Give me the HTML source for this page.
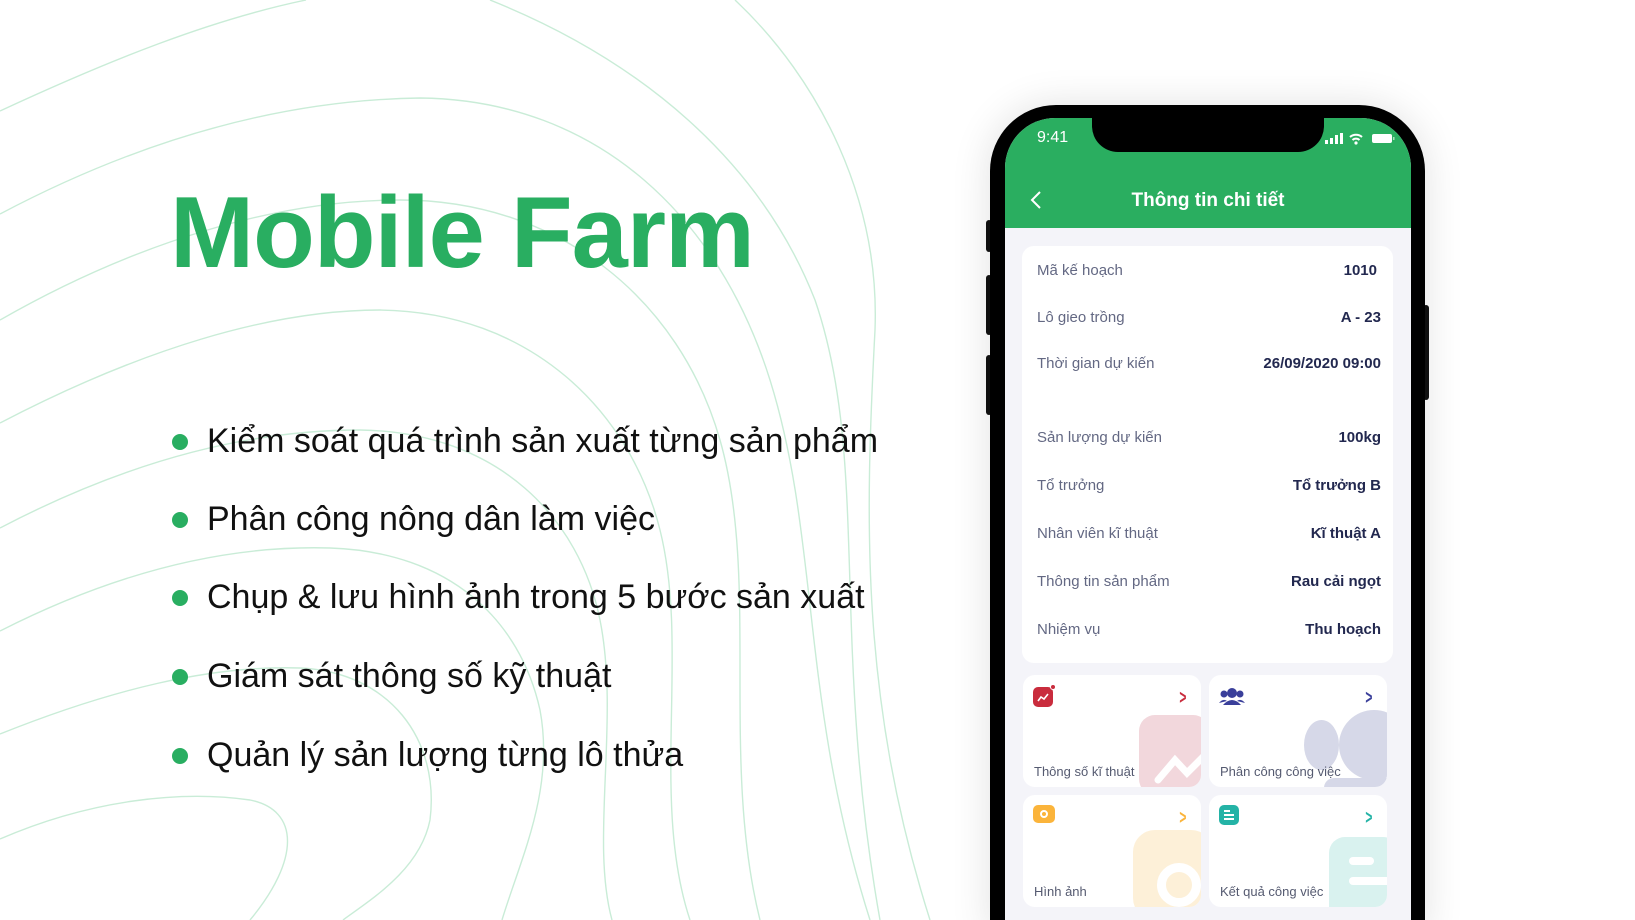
<!DOCTYPE html>
<html><head><meta charset="utf-8"><style>
*{margin:0;padding:0;box-sizing:border-box}
html{width:1635px;height:920px;overflow:hidden}
body{width:1635px;height:920px;overflow:hidden;background:#fff;position:relative;font-family:"Liberation Sans",sans-serif}
.abs{position:absolute}
h1{position:absolute;left:170px;top:176px;font-size:101px;font-weight:bold;color:#29ae61;letter-spacing:-1px;white-space:nowrap}
.b{position:absolute;left:172px;font-size:34px;color:#111;white-space:nowrap;line-height:40px}
.b:before{content:"";position:absolute;left:0;top:13px;width:16px;height:16px;border-radius:50%;background:#29ae61}
.b span{margin-left:35px}
.phone{position:absolute;left:990px;top:105px;width:435px;height:830px;background:#000;border-radius:66px 66px 0 0;box-shadow:0 0 40px rgba(0,0,0,.12)}
.screen{position:absolute;left:1005px;top:118px;width:406px;height:802px;background:#f4f4f9;border-radius:50px 50px 0 0;overflow:hidden}
.hdr{position:absolute;left:0;top:0;width:406px;height:110px;background:#2aae60}
.notch{position:absolute;left:87px;top:-2px;width:232px;height:36px;background:#000;border-radius:0 0 26px 26px}
.card{position:absolute;left:17px;top:128px;width:371px;height:417px;background:#fff;border-radius:12px}
.row{position:absolute;left:15px;right:12px;font-size:15px;line-height:20px}
.row .l{color:#636883}
.row .v{position:absolute;right:0;top:0;color:#22284f;font-weight:bold}
.tile{position:absolute;width:178px;height:112px;background:#fff;border-radius:12px;overflow:hidden}
.tile .t{position:absolute;left:11px;bottom:8px;font-size:13px;color:#555a70;white-space:nowrap}
.tile .ch{position:absolute;right:12px;top:12px;font-size:20px;font-weight:bold;transform:scaleX(.6)}
.btn{position:absolute;background:#111;width:6px}
</style></head><body>
<svg class="abs" style="left:0;top:0" width="960" height="920" fill="none" stroke="#c9ecd7" stroke-width="1.4">
<path d="M0,111 C110,60 210,20 306,0"/>
<path d="M0,214 C140,140 280,100 420,98 C600,100 720,220 770,380 C820,540 800,700 870,920"/>
<path d="M490,0 C640,60 760,160 815,300 C870,460 830,640 880,920"/>
<path d="M735,0 C820,80 880,200 875,330 C865,520 860,700 930,920"/>
<path d="M0,320 C140,240 280,200 400,200 C560,200 680,300 720,440 C760,580 720,760 760,920"/>
<path d="M0,423 C140,350 270,310 380,310 C530,312 630,410 660,530 C690,650 650,800 690,920"/>
<path d="M0,528 C130,460 250,430 360,430 C500,432 580,520 600,620 C620,720 590,840 612,920"/>
<path d="M0,631 C120,570 230,545 330,548 C450,552 520,620 540,710 C555,790 520,860 502,920"/>
<path d="M0,734 C110,690 210,665 300,668 C390,672 440,740 430,820 C420,870 370,900 343,920"/>
<path d="M0,839 C90,800 180,790 250,800 C300,810 300,860 250,920"/>
</svg>
<h1>Mobile Farm</h1>
<div class="b" style="top:421px"><span>Kiểm soát quá trình sản xuất từng sản phẩm</span></div>
<div class="b" style="top:499px"><span>Phân công nông dân làm việc</span></div>
<div class="b" style="top:577px"><span>Chụp &amp; lưu hình ảnh trong 5 bước sản xuất</span></div>
<div class="b" style="top:656px"><span>Giám sát thông số kỹ thuật</span></div>
<div class="b" style="top:735px"><span>Quản lý sản lượng từng lô thửa</span></div>

<div class="btn" style="left:986px;top:220px;height:32px;border-radius:3px"></div>
<div class="btn" style="left:986px;top:275px;height:60px;border-radius:3px"></div>
<div class="btn" style="left:986px;top:355px;height:60px;border-radius:3px"></div>
<div class="btn" style="left:1423px;top:305px;height:95px;border-radius:3px"></div>
<div class="phone"></div>
<div class="screen">
 <div class="hdr">
  <div class="notch"></div>
  <div class="abs" style="left:32px;top:11px;color:#fff;font-size:16px">9:41</div>
  <svg class="abs" style="left:320px;top:14px" width="72" height="14">
   <rect x="0" y="8" width="3" height="4" fill="#fff"/><rect x="5" y="6" width="3" height="6" fill="#fff"/><rect x="10" y="3" width="3" height="9" fill="#fff"/><rect x="15" y="1" width="3" height="11" fill="#fff"/>
   <path d="M25,5 A9,9 0 0 1 37,5 M27.5,8 A5,5 0 0 1 34.5,8" stroke="#fff" stroke-width="2" fill="none"/><circle cx="31" cy="11" r="1.6" fill="#fff"/>
   <rect x="47" y="2" width="20" height="9" rx="2" fill="#fff"/><rect x="68" y="5" width="1.5" height="3" fill="#fff" opacity=".6"/>
  </svg>
  <svg class="abs" style="left:24px;top:72px" width="14" height="20"><path d="M11,2 L3,10 L11,18" stroke="#fff" stroke-width="2" fill="none"/></svg>
  <div class="abs" style="left:0;width:406px;top:72px;text-align:center;color:#fff;font-size:19px;font-weight:bold">Thông tin chi tiết</div>
 </div>
 <div class="card">
  <div class="row" style="top:15px"><span class="l">Mã kế hoạch</span><span class="v" style="right:4px">1010</span></div>
  <div class="row" style="top:62px"><span class="l">Lô gieo trồng</span><span class="v">A - 23</span></div>
  <div class="row" style="top:108px"><span class="l">Thời gian dự kiến</span><span class="v">26/09/2020 09:00</span></div>
  <div class="row" style="top:182px"><span class="l">Sản lượng dự kiến</span><span class="v">100kg</span></div>
  <div class="row" style="top:230px"><span class="l">Tổ trưởng</span><span class="v">Tổ trưởng B</span></div>
  <div class="row" style="top:278px"><span class="l">Nhân viên kĩ thuật</span><span class="v">Kĩ thuật A</span></div>
  <div class="row" style="top:326px"><span class="l">Thông tin sản phẩm</span><span class="v">Rau cải ngọt</span></div>
  <div class="row" style="top:374px"><span class="l">Nhiệm vụ</span><span class="v">Thu hoạch</span></div>
 </div>
 <div class="tile" style="left:18px;top:557px">
  <div class="abs" style="left:116px;top:40px;width:70px;height:80px;background:#f2d7dc;border-radius:16px"></div>
  <svg class="abs" style="left:130px;top:70px" width="60" height="40"><path d="M5,35 L22,15 L34,28 L58,4" stroke="#fff" stroke-width="7" fill="none" stroke-linecap="round"/></svg>
  <div class="abs" style="left:10px;top:12px;width:20px;height:20px;background:#c92c3d;border-radius:5px"></div>
  <svg class="abs" style="left:13px;top:16px" width="14" height="12"><path d="M2,10 L5,6 L8,8 L12,3" stroke="#fff" stroke-width="1.6" fill="none"/></svg>
  <div class="abs" style="left:27px;top:9px;width:6px;height:6px;background:#c92c3d;border-radius:50%;border:1px solid #fff"></div>
  <div class="ch" style="color:#c92c3d">&gt;</div>
  <div class="t">Thông số kĩ thuật</div>
 </div>
 <div class="tile" style="left:204px;top:557px">
  <div class="abs" style="left:130px;top:35px;width:70px;height:70px;background:#d6d8e8;border-radius:50%"></div>
  <div class="abs" style="left:95px;top:45px;width:35px;height:50px;background:#d6d8e8;border-radius:50%"></div>
  <div class="abs" style="left:115px;top:103px;width:80px;height:20px;background:#d6d8e8;border-radius:10px"></div>
  <svg class="abs" style="left:10px;top:12px" width="26" height="20"><circle cx="13" cy="6" r="5" fill="#3a3f9a"/><circle cx="5" cy="7" r="3.5" fill="#3a3f9a"/><circle cx="21" cy="7" r="3.5" fill="#3a3f9a"/><path d="M4,18 Q13,8 22,18 Z" fill="#3a3f9a"/><path d="M0,16 Q4,11 8,14 M18,14 Q22,11 26,16" fill="#3a3f9a"/></svg>
  <div class="ch" style="color:#3a3f9a">&gt;</div>
  <div class="t">Phân công công việc</div>
 </div>
 <div class="tile" style="left:18px;top:677px">
  <div class="abs" style="left:110px;top:35px;width:80px;height:90px;background:#fdf0d8;border-radius:22px"></div>
  <div class="abs" style="left:134px;top:68px;width:44px;height:44px;border:9px solid #fff;border-radius:50%"></div>
  <div class="abs" style="left:10px;top:10px;width:22px;height:18px;background:#fbb43b;border-radius:5px"></div>
  <div class="abs" style="left:17px;top:15px;width:8px;height:8px;border:2px solid #fff;border-radius:50%"></div>
  <div class="ch" style="color:#fbb43b">&gt;</div>
  <div class="t">Hình ảnh</div>
 </div>
 <div class="tile" style="left:204px;top:677px">
  <div class="abs" style="left:120px;top:42px;width:70px;height:90px;background:#d9f2ef;border-radius:16px"></div>
  <div class="abs" style="left:140px;top:62px;width:25px;height:8px;background:#fff;border-radius:4px"></div>
  <div class="abs" style="left:140px;top:82px;width:50px;height:8px;background:#fff;border-radius:4px"></div>
  <div class="abs" style="left:10px;top:10px;width:20px;height:20px;background:#24b3a6;border-radius:5px"></div>
  <div class="abs" style="left:15px;top:15px;width:6px;height:2px;background:#fff"></div>
  <div class="abs" style="left:15px;top:19px;width:10px;height:2px;background:#fff"></div>
  <div class="abs" style="left:15px;top:23px;width:10px;height:2px;background:#fff"></div>
  <div class="ch" style="color:#24b3a6">&gt;</div>
  <div class="t">Kết quả công việc</div>
 </div>
</div>
</body></html>
